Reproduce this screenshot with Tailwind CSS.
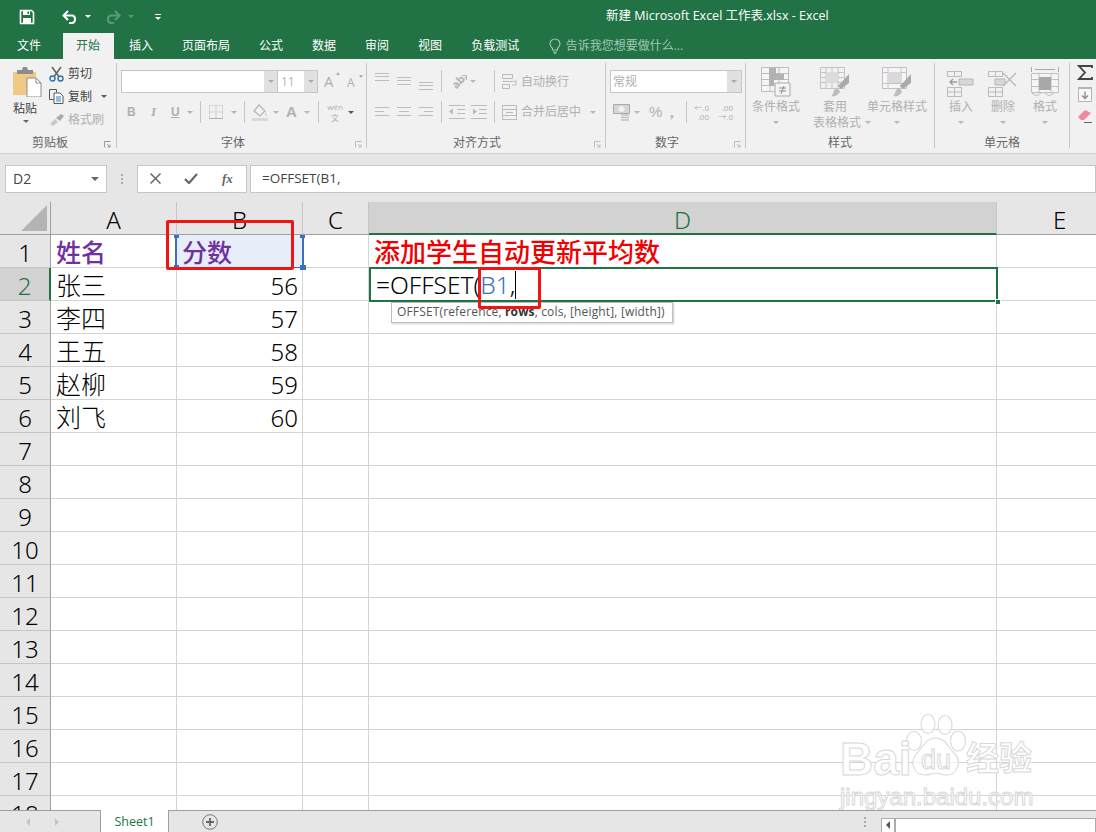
<!DOCTYPE html>
<html lang="zh-CN">
<head>
<meta charset="UTF-8" />
<title>新建 Microsoft Excel 工作表.xlsx - Excel</title>
<script src="https://cdn.jsdelivr.net/npm/@tailwindcss/browser@4"></script>
</head>
<body class="w-[1096px] h-[832px] overflow-hidden bg-white flex flex-col font-['Open_Sans','Noto_Sans_CJK_SC',sans-serif] text-[12px] text-[#444]">

<!-- title bar -->
<header class="h-[33px] shrink-0 bg-[#217346] flex items-center text-white">
  <svg class="ml-[19px] w-[16px] h-[16px]" viewBox="0 0 16 16"><path d="M1.5 1.5h11l2 2v11h-13z" fill="none" stroke="#fff" stroke-width="1.6"/><path d="M4 1.5h7v4.5H4z M4 9h8v5.500H4z" fill="#fff"/><path d="M8.500 2.500h1.500v2.500h-1.500z" fill="#217346"/></svg>
  <svg class="ml-[27px] w-[16px] h-[14px]" viewBox="0 0 16 14"><path d="M3 5.500h7.500a4 4 0 0 1 0 7.500H7" fill="none" stroke="#fff" stroke-width="2"/><path d="M6 1 L1.500 5.500 L6 10" fill="none" stroke="#fff" stroke-width="2"/></svg>
  <span class="ml-[7px] border-x-[3px] border-t-[3px] border-x-transparent border-t-white"></span>
  <svg class="ml-[14px] w-[16px] h-[14px]" viewBox="0 0 16 14"><path d="M13 5.500H5.500a4 4 0 0 0 0 7.500H9" fill="none" stroke="#5c9a79" stroke-width="2"/><path d="M10 1 L14.500 5.500 L10 10" fill="none" stroke="#5c9a79" stroke-width="2"/></svg>
  <span class="ml-[7px] border-x-[3px] border-t-[3px] border-x-transparent border-t-[#5c9a79]"></span>
  <span class="ml-[21px] flex flex-col items-center gap-[2px]"><span class="w-[6px] h-px bg-white"></span><span class="border-x-[3px] border-t-[3px] border-x-transparent border-t-white"></span></span>
  <span class="ml-[445px] text-[12.5px] whitespace-nowrap">新建 Microsoft Excel 工作表.xlsx - Excel</span>
</header>

<!-- tabs -->
<nav class="h-[26px] shrink-0 bg-[#217346] flex text-white pl-[3.5px] gap-[2px] leading-[26px]">
  <span class="px-[13.5px] mr-[6px]">文件</span>
  <span class="px-[13.5px] bg-[#f1f1f1] text-[#217346]">开始</span>
  <span class="px-[13.5px]">插入</span>
  <span class="px-[13.5px]">页面布局</span>
  <span class="px-[13.5px]">公式</span>
  <span class="px-[13.5px]">数据</span>
  <span class="px-[13.5px]">审阅</span>
  <span class="px-[13.5px]">视图</span>
  <span class="px-[13.5px]">负载测试</span>
  <span class="ml-[14px] flex items-center text-[#a5c8b5] whitespace-nowrap">
    <svg class="w-[12px] h-[16px] mr-[5px]" viewBox="0 0 12 16"><path d="M3.500 10.500C2 9 1 8 1 6a5 5 0 0 1 10 0c0 2-1 3-2.500 4.500V12h-5z M4 14h4 M5 15.500h2" fill="none" stroke="#a5c8b5" stroke-width="1.100"/></svg>告诉我您想要做什么...
  </span>
</nav>

<!-- ribbon -->
<section class="h-[95px] shrink-0 bg-[#f1f1f1] border-b border-[#d2d2d2] flex pt-[4px] text-[#b0b0b0]">

  <!-- clipboard -->
  <div class="relative w-[117px] h-[85px] border-r border-[#c6c6c6] flex flex-col">
    <div class="flex h-[70px]">
      <div class="w-[49px] flex flex-col items-start text-[#444]">
        <svg class="ml-[12px] mt-[3px] w-[30px] h-[31px]" viewBox="0 0 30 31"><path d="M1 6h23v23H1z" fill="#efc985"/><path d="M5 4h5l1-3h4l1 3h5v4H5z" fill="#8c8c8c"/><path d="M15 12h9l5 5v14H15z" fill="#fff" stroke="#8c8c8c"/><path d="M24 12v5h5" fill="none" stroke="#8c8c8c"/></svg>
        <span class="ml-[13px] mt-[4px] leading-[16px]">粘贴</span>
        <span class="ml-[23px] mt-[3px] border-x-[3px] border-t-[3px] border-x-transparent border-t-[#666]"></span>
      </div>
      <div class="-mt-px flex flex-col">
        <div class="h-[23px] flex items-center text-[#444]">
          <svg class="w-[15px] h-[16px] mr-[4px]" viewBox="0 0 15 16"><path d="M3 1l6.500 9 M12 1L5.500 10" stroke="#666" stroke-width="1.600" fill="none"/><circle cx="3.500" cy="12.500" r="2.500" fill="none" stroke="#2b6fb3" stroke-width="1.400"/><circle cx="11.500" cy="12.500" r="2.500" fill="none" stroke="#2b6fb3" stroke-width="1.400"/></svg>剪切
        </div>
        <div class="h-[23px] flex items-center text-[#444]">
          <svg class="w-[15px] h-[15px] mr-[4px]" viewBox="0 0 15 15"><path d="M.5.500h7v3M.5.500v10h4" fill="none" stroke="#555"/><path d="M5 4h6l3 3v7.500H5z" fill="#fff" stroke="#555"/><path d="M7 8h5M7 10h5M7 12h5" stroke="#3a76b5"/></svg>复制
          <span class="ml-[9px] border-x-[3px] border-t-[3px] border-x-transparent border-t-[#555]"></span>
        </div>
        <div class="h-[23px] pt-[1px] flex items-center">
          <svg class="w-[16px] h-[14px] mr-[3px]" viewBox="0 0 16 14"><path d="M1 11l5-5 3 3-5 4z" fill="#c8c8c8"/><path d="M7 5l5-4 3 2-4 5z" fill="#ababab"/></svg>格式刷
        </div>
      </div>
    </div>
    <span class="ml-[32px] mt-auto -mb-[3px] text-[#666] leading-[16px]">剪贴板</span>
    <svg class="absolute left-[104px] top-[78px] w-[7px] h-[7px]" viewBox="0 0 7 7"><path d="M.5 6.500v-6h6M3 3l3 3M6 3.500V6H3.500" fill="none" stroke="#999"/></svg>
  </div>

  <!-- font -->
  <div class="relative w-[250px] h-[85px] border-r border-[#c6c6c6] flex flex-col">
    <div class="mt-[7px] h-[23px] flex items-center pl-[4px]">
      <div class="w-[157px] h-[23px] bg-white border border-[#c6c6c6] flex justify-end">
        <span class="w-[13px] bg-[#e1e1e1] flex items-center justify-center"><span class="border-x-[3px] border-t-[3px] border-x-transparent border-t-[#aaa]"></span></span>
      </div>
      <div class="w-[40px] h-[23px] bg-white border border-l-0 border-[#c6c6c6] flex items-center justify-between pl-[3px]">
        <span class="text-[#b5b5b5]">11</span>
        <span class="w-[13px] h-full bg-[#e1e1e1] flex items-center justify-center"><span class="border-x-[3px] border-t-[3px] border-x-transparent border-t-[#aaa]"></span></span>
      </div>
      <span class="ml-[6px] relative text-[15px] w-[16px]">A<span class="absolute right-0 top-[2px] border-x-[2.5px] border-b-[3px] border-x-transparent border-b-[#b0b0b0]"></span></span>
      <span class="ml-[7px] relative text-[12px] w-[16px] pt-[2px]">A<span class="absolute right-0 top-[3px] border-x-[2.5px] border-t-[3px] border-x-transparent border-t-[#b0b0b0]"></span></span>
    </div>
    <div class="mt-[8px] h-[22px] flex items-center">
      <span class="ml-[10px] w-[9px] font-bold font-['Liberation_Sans']">B</span>
      <span class="ml-[15px] w-[6px] italic font-['Liberation_Serif'] font-bold text-[13px]">I</span>
      <span class="ml-[14px] w-[10px] underline font-bold font-['Liberation_Sans']">U</span>
      <span class="ml-[6px] border-x-[3px] border-t-[3px] border-x-transparent border-t-[#b8b8b8]"></span>
      <span class="ml-[7px] w-px h-[22px] bg-[#c6c6c6]"></span>
      <svg class="ml-[8px] w-[14px] h-[14px]" viewBox="0 0 14 14"><path d="M.5.500h13v13H.5z M7 .5v13 M.5 7h13" fill="none" stroke="#bbb" stroke-dasharray="1 1"/><path d="M0 13.500h14" stroke="#b0b0b0"/></svg>
      <span class="ml-[8px] border-x-[3px] border-t-[3px] border-x-transparent border-t-[#b8b8b8]"></span>
      <span class="ml-[7px] w-px h-[22px] bg-[#c6c6c6]"></span>
      <svg class="ml-[7px] w-[16px] h-[17px]" viewBox="0 0 16 17"><path d="M7 1l6 6-5 5-6-5z" fill="none" stroke="#b5b5b5" stroke-width="1.200"/><path d="M13 8l2 3-1 1z" fill="#b5b5b5"/><path d="M0 14h16v3H0z" fill="#d9d9d9"/></svg>
      <span class="ml-[5px] border-x-[3px] border-t-[3px] border-x-transparent border-t-[#b8b8b8]"></span>
      <span class="ml-[7px] w-[14px] text-[15px] font-['Liberation_Sans'] font-bold">A</span>
      <span class="ml-[4px] border-x-[3px] border-t-[3px] border-x-transparent border-t-[#b8b8b8]"></span>
      <span class="ml-[8px] w-px h-[22px] bg-[#c6c6c6]"></span>
      <span class="ml-[8px] w-[16px] flex flex-col items-center gap-[1px] text-[8px]"><span class="h-[10px] leading-[10px]">wén</span><span class="h-[10px] leading-[10px]">文</span></span>
      <span class="ml-[5px] border-x-[3px] border-t-[3px] border-x-transparent border-t-[#555]"></span>
    </div>
    <span class="ml-[104px] mt-auto -mb-[3px] text-[#666] leading-[16px]">字体</span>
    <svg class="absolute left-[238px] top-[78px] w-[7px] h-[7px]" viewBox="0 0 7 7"><path d="M.5 6.500v-6h6M3 3l3 3M6 3.500V6H3.500" fill="none" stroke="#bbb"/></svg>
  </div>

  <!-- alignment -->
  <div class="relative w-[239px] h-[85px] border-r border-[#c6c6c6] flex flex-col">
    <div class="mt-[7px] h-[22px] flex items-center pl-[8px]">
      <svg class="w-[58px] h-[22px]" viewBox="0 0 58 22"><path d="M0 3.500h14M0 6.500h14M0 10.500h14 M22 7.500h14M22 10.500h14M22 14.500h14 M44 12.500h14M44 15.500h14M44 19.500h14" stroke="#bdbdbd"/></svg>
      <span class="ml-[8px] w-px h-[22px] bg-[#c6c6c6]"></span>
      <span class="relative ml-[7px] w-[18px] h-[18px] flex items-center justify-center">
        <span class="-rotate-45 text-[11px] font-bold leading-[11px] text-[#b5b5b5]">ab</span>
        <svg class="absolute left-0 top-0 w-[18px] h-[18px]" viewBox="0 0 18 18"><path d="M8 15l9-10M13 3.500h4.500V8" fill="none" stroke="#b5b5b5"/></svg>
      </span>
      <span class="ml-[3px] border-x-[3px] border-t-[3px] border-x-transparent border-t-[#b8b8b8]"></span>
      <span class="ml-[18px] w-px h-[22px] bg-[#c6c6c6]"></span>
      <svg class="ml-[7px] w-[15px] h-[15px]" viewBox="0 0 15 15"><path d="M.5.500h10v4H.5z M.5 10.500h7v4h-7z M.5 7.500h10a2 2 0 0 1 3 1M14 6v5l-4 0" fill="none" stroke="#bbb"/></svg>
      <span class="ml-[4px] pt-[2px]">自动换行</span>
    </div>
    <div class="mt-[9px] h-[22px] flex items-center pl-[8px]">
      <svg class="w-[58px] h-[22px]" viewBox="0 0 58 22"><path d="M0 6.500h14M0 10.500h9M0 14.500h14 M22 6.500h14M24 10.500h10M22 14.500h14 M44 6.500h14M49 10.500h9M44 14.500h14" stroke="#bdbdbd"/></svg>
      <span class="ml-[8px] w-px h-[22px] bg-[#c6c6c6]"></span>
      <svg class="ml-[7px] w-[38px] h-[14px]" viewBox="0 0 38 14"><path d="M0 .5h16M8 4.500h8M8 8.500h8M0 13.500h16 M22 .5h16M30 4.500h8M30 8.500h8M22 13.500h16" stroke="#bbb"/><path d="M0 6.500l4-3v6z M28 6.500l-4-3v6z" fill="#bbb"/></svg>
      <span class="ml-[7px] w-px h-[22px] bg-[#c6c6c6]"></span>
      <svg class="ml-[7px] w-[15px] h-[15px]" viewBox="0 0 15 15"><path d="M.5.500h14v14H.5z M.5 4.500h14M.5 10.500h14M4 7.500h7" fill="none" stroke="#bbb"/></svg>
      <span class="ml-[4px]">合并后居中</span>
      <span class="ml-[9px] border-x-[3px] border-t-[3px] border-x-transparent border-t-[#b8b8b8]"></span>
    </div>
    <span class="ml-[86px] mt-auto -mb-[3px] text-[#666] leading-[16px]">对齐方式</span>
    <svg class="absolute left-[227px] top-[78px] w-[7px] h-[7px]" viewBox="0 0 7 7"><path d="M.5 6.500v-6h6M3 3l3 3M6 3.500V6H3.500" fill="none" stroke="#bbb"/></svg>
  </div>

  <!-- number -->
  <div class="relative w-[140px] h-[85px] border-r border-[#c6c6c6] flex flex-col">
    <div class="mt-[7px] ml-[4px] w-[132px] h-[23px] bg-white border border-[#c6c6c6] flex items-center justify-between pl-[2px]">
      <span>常规</span>
      <span class="w-[14px] h-full bg-[#e1e1e1] flex items-center justify-center"><span class="border-x-[3px] border-t-[3px] border-x-transparent border-t-[#aaa]"></span></span>
    </div>
    <div class="mt-[8px] h-[22px] flex items-center">
      <svg class="ml-[7px] w-[17px] h-[17px]" viewBox="0 0 17 17"><path d="M.5.500h16v9H.5z" fill="#d6d6d6" stroke="#aaa"/><circle cx="8.500" cy="5" r="3" fill="#f1f1f1"/><path d="M8 11h8M8 13.500h8M8 16h8" stroke="#c2c2c2" stroke-width="1.500"/></svg>
      <span class="ml-[4px] border-x-[3px] border-t-[3px] border-x-transparent border-t-[#b8b8b8]"></span>
      <span class="ml-[9px] text-[15px] w-[14px] font-['Liberation_Sans']">%</span>
      <span class="ml-[7px] text-[15px] w-[6px] font-bold font-['Liberation_Serif']">,</span>
      <span class="ml-[10px] w-px h-[22px] bg-[#c6c6c6]"></span>
      <span class="ml-[7px] w-[15px] flex flex-col text-[8px] items-end"><span class="h-[9px] leading-[9px]">←.0</span><span class="h-[9px] leading-[9px]">.00</span></span>
      <span class="ml-[6px] w-[18px] flex flex-col text-[8px] items-end"><span class="h-[9px] leading-[9px]">.00</span><span class="h-[9px] leading-[9px]">→.0</span></span>
    </div>
    <span class="ml-[49px] mt-auto -mb-[3px] text-[#666] leading-[16px]">数字</span>
    <svg class="absolute left-[128px] top-[78px] w-[7px] h-[7px]" viewBox="0 0 7 7"><path d="M.5 6.500v-6h6M3 3l3 3M6 3.500V6H3.500" fill="none" stroke="#bbb"/></svg>
  </div>

  <!-- styles -->
  <div class="relative w-[189px] h-[85px] border-r border-[#c6c6c6] flex flex-col">
    <div class="flex h-[72px] pl-[4px]">
      <div class="w-[52px] flex flex-col items-center">
        <svg class="mt-[4px] w-[30px] h-[30px]" viewBox="0 0 30 30"><path d="M.5.500h27v24H.5z M9 .5v24 M18 .5v24 M.5 6.500h27 M.5 12.500h27 M.5 18.500h27" fill="#f7f4f7" stroke="#bdbdbd"/><path d="M8 1h7v6H8z M8 7h15v6H8z M8 13h5v6H8z" fill="#b2b2b2"/><path d="M14 16h15v13H14z" fill="#f4f4f4" stroke="#aaa"/><path d="M18 21h7M18 24h7M23 19l-3 8" stroke="#8d8d8d" fill="none"/></svg>
        <span class="mt-[2px] leading-[16px]">条件格式</span>
        <span class="mt-[6px] border-x-[3px] border-t-[3px] border-x-transparent border-t-[#b8b8b8]"></span>
      </div>
      <div class="ml-[2px] w-[62px] flex flex-col items-center">
        <svg class="mt-[4px] w-[30px] h-[30px]" viewBox="0 0 30 30"><path d="M.5.500h24v21H.5z M6 .5v21 M12 .5v21 M18 .5v21 M.5 5.500h24 M.5 10.500h24 M.5 15.500h24" fill="#f1f1f1" stroke="#c4c4c4"/><path d="M6 5h12v11H6z" fill="#dcdcdc"/><path d="M29 7v9l-8 6-3-3z" fill="#aaa"/><path d="M11 29c3-1 1-6 6-8l3 3c-1 4-5 6-9 5z" fill="#bdbdbd"/></svg>
        <span class="mt-[2px] leading-[16px]">套用</span>
        <span class="leading-[15px] flex items-center whitespace-nowrap ml-[14px]">表格格式<span class="ml-[4px] border-x-[3px] border-t-[3px] border-x-transparent border-t-[#b8b8b8]"></span></span>
      </div>
      <div class="w-[62px] flex flex-col items-center">
        <svg class="mt-[4px] w-[30px] h-[30px]" viewBox="0 0 30 30"><path d="M.5.500h24v21H.5z" fill="#f7f4f7" stroke="#c0c0c0"/><path d="M.5 5.500h24M.5 16.500h24M6 .5v21M19 .5v21" stroke="#c4c4c4"/><path d="M6 5h13v11H6z" fill="#ddd8dd"/><path d="M29 7v9l-8 6-3-3z" fill="#aaa"/><path d="M11 29c3-1 1-6 6-8l3 3c-1 4-5 6-9 5z" fill="#bdbdbd"/></svg>
        <span class="mt-[2px] leading-[16px] whitespace-nowrap">单元格样式</span>
        <span class="mt-[6px] border-x-[3px] border-t-[3px] border-x-transparent border-t-[#b8b8b8]"></span>
      </div>
    </div>
    <span class="ml-[82px] mt-auto -mb-[3px] text-[#666] leading-[16px]">样式</span>
  </div>

  <!-- cells -->
  <div class="relative w-[135px] h-[85px] border-r border-[#c6c6c6] flex flex-col">
    <div class="flex h-[72px] pl-[5px]">
      <div class="w-[42px] flex flex-col items-center">
        <svg class="mt-[4px] w-[28px] h-[30px]" viewBox="0 0 28 30"><path d="M.5 4.500h7v5h-7z M7.500 4.500h7v5h-7z M.5 20.500h7v9h-7z M7.500 20.500h7v9h-7z M.5 25h14" fill="none" stroke="#bbb"/><path d="M12 12h14v6H12z" fill="#d8d8d8" stroke="#b5b5b5"/><path d="M10 15H3M6 12l-3 3 3 3" fill="none" stroke="#999" stroke-width="1.300"/></svg>
        <span class="mt-[2px] leading-[16px]">插入</span>
        <span class="mt-[6px] border-x-[3px] border-t-[3px] border-x-transparent border-t-[#b8b8b8]"></span>
      </div>
      <div class="w-[42px] flex flex-col items-center">
        <svg class="mt-[4px] w-[30px] h-[30px]" viewBox="0 0 30 30"><path d="M.5 4.500h7v5h-7z M7.500 4.500h7v5h-7z M.5 20.500h7v9h-7z M7.500 20.500h7v9h-7z M.5 25h14" fill="none" stroke="#bbb"/><path d="M7 12h10v6H7z" fill="#d8d8d8" stroke="#b5b5b5"/><path d="M15 6l13 13M28 6L15 19" stroke="#bdbdbd" stroke-width="1.500"/></svg>
        <span class="mt-[2px] leading-[16px]">删除</span>
        <span class="mt-[6px] border-x-[3px] border-t-[3px] border-x-transparent border-t-[#b8b8b8]"></span>
      </div>
      <div class="w-[42px] flex flex-col items-center">
        <svg class="mt-[4px] w-[28px] h-[30px]" viewBox="0 0 28 30"><path d="M.5 0v5M27.500 0v5M4 2.500h20" stroke="#aaa"/><path d="M.5 6.500h27v19H.5z M8 6.500v19 M20 6.500v19 M.5 12.500h27 M.5 19.500h27" fill="#f7f4f7" stroke="#c0c0c0"/><path d="M8 10h12v13H8z" fill="#a8a8a8"/><path d="M1 26c3 3 6 3 9 0M14 26c3 3 6 3 9 0" fill="none" stroke="#bbb"/></svg>
        <span class="mt-[2px] leading-[16px]">格式</span>
        <span class="mt-[6px] border-x-[3px] border-t-[3px] border-x-transparent border-t-[#b8b8b8]"></span>
      </div>
    </div>
    <span class="ml-[49px] mt-auto -mb-[3px] text-[#666] leading-[16px]">单元格</span>
  </div>

  <!-- editing -->
  <div class="pl-[7px] flex flex-col items-start">
    <svg class="mt-[2px] w-[16px] h-[15px]" viewBox="0 0 16 15"><path d="M15 3V1H2l6 6.500L2 14h13v-2" fill="none" stroke="#444" stroke-width="1.800"/></svg>
    <svg class="mt-[7px] ml-[1px] w-[14px] h-[15px]" viewBox="0 0 14 15"><path d="M.5.500h13v14H.5z" fill="#f8f8f8" stroke="#b5b5b5"/><path d="M0 0h14v2H0z" fill="#b5b5b5"/><path d="M7 4.500v7M4 8.500l3 3 3-3" fill="none" stroke="#8f8f8f" stroke-width="1.400"/></svg>
    <svg class="mt-[7px] ml-[1px] w-[14px] h-[14px]" viewBox="0 0 14 14"><path d="M0 8l7-7 6 3-7 7H3z" fill="#ee8a9c"/><path d="M6 13.500h8" stroke="#666"/></svg>
  </div>
</section>

<!-- formula bar -->
<section class="h-[48px] shrink-0 bg-[#e6e6e6] flex items-center pt-[1px] text-[#444]">
  <div class="ml-[5px] w-[102px] h-[28px] bg-white border border-[#c6c6c6] flex items-center justify-between px-[7px] text-[14px]">
    <span>D2</span>
    <span class="border-x-[4px] border-t-[4px] border-x-transparent border-t-[#666]"></span>
  </div>
  <div class="ml-[14px] flex flex-col gap-[2px]"><span class="w-[2px] h-[2px] bg-[#aaa]"></span><span class="w-[2px] h-[2px] bg-[#aaa]"></span><span class="w-[2px] h-[2px] bg-[#aaa]"></span></div>
  <div class="ml-[14px] w-[110px] h-[28px] bg-white border border-[#c6c6c6] flex items-center text-[#666]">
    <svg class="ml-[12px] w-[11px] h-[11px]" viewBox="0 0 11 11"><path d="M.5.500l10 10M10.500.5l-10 10" stroke="#666" stroke-width="1.500"/></svg>
    <svg class="ml-[23px] w-[14px] h-[11px]" viewBox="0 0 14 11"><path d="M1 6l4 4 8-9" fill="none" stroke="#666" stroke-width="2.200"/></svg>
    <span class="ml-[24px] italic font-bold font-['Liberation_Serif'] text-[13px]">fx</span>
  </div>
  <div class="ml-[3px] flex-1 h-[28px] bg-white border border-[#c6c6c6] flex items-center pl-[11px] pb-[1px] text-[13.5px]">=OFFSET(B1,</div>
</section>

<!-- sheet -->
<main class="relative flex-1 min-h-0 overflow-hidden font-['Noto_Sans','Noto_Sans_CJK_SC',sans-serif] font-light text-[24px] text-black">
  <div id="sheet" class="grid grid-cols-[51px_126px_126px_66px_628px_1fr] auto-rows-[33px] leading-[35px]">
    <div class="bg-[#e6e6e6] border-r border-b border-[#9f9f9f] relative">
      <svg class="absolute right-[3px] bottom-[3px] w-[26px] h-[26px]" viewBox="0 0 26 26"><path d="M26 0v26H0z" fill="#b4b4b4"/></svg>
    </div>
    <div class="bg-[#e6e6e6] border-r border-b border-[#c6c6c6] border-b-[#9f9f9f] text-center">A</div>
    <div class="bg-[#e6e6e6] border-r border-b border-[#c6c6c6] border-b-[#9f9f9f] text-center">B</div>
    <div class="bg-[#e6e6e6] border-r border-b border-[#c6c6c6] border-b-[#9f9f9f] text-center">C</div>
    <div class="bg-[#d2d2d2] border-r border-[#c6c6c6] border-b-2 border-b-[#217346] text-center text-[#217346]">D</div>
    <div class="bg-[#e6e6e6] border-b border-[#9f9f9f] pl-[56px]">E</div>

    <div class="bg-[#e6e6e6] border-r border-b border-r-[#9f9f9f] border-b-[#c6c6c6] text-center">1</div>
    <div class="border-r border-b border-[#d4d4d4] pl-[5px] text-[25px] font-medium text-[#7030a0]">姓名</div>
    <div class="border-r border-b border-[#d4d4d4] pl-[5px] text-[25px] font-medium text-[#7030a0] bg-[#e8eef9]">分数</div>
    <div class="border-r border-b border-[#d4d4d4]"></div>
    <div class="border-r border-b border-[#d4d4d4] pl-[5px] text-[26px] font-medium text-[#f00000] whitespace-nowrap">添加学生自动更新平均数</div>
    <div class="border-b border-[#d4d4d4]"></div>

    <div class="bg-[#d2d2d2] border-r-2 border-b border-r-[#217346] border-b-[#c6c6c6] text-center text-[#217346]">2</div>
    <div class="border-r border-b border-[#d4d4d4] pl-[5px] text-[25px]">张三</div>
    <div class="border-r border-b border-[#d4d4d4] pr-[4px] text-right">56</div>
    <div class="border-r border-b border-[#d4d4d4]"></div>
    <div class="border-r border-b border-[#d4d4d4]"></div>
    <div class="border-b border-[#d4d4d4]"></div>

    <div class="bg-[#e6e6e6] border-r border-b border-r-[#9f9f9f] border-b-[#c6c6c6] text-center">3</div>
    <div class="border-r border-b border-[#d4d4d4] pl-[5px] text-[25px]">李四</div>
    <div class="border-r border-b border-[#d4d4d4] pr-[4px] text-right">57</div>
    <div class="border-r border-b border-[#d4d4d4]"></div>
    <div class="border-r border-b border-[#d4d4d4]"></div>
    <div class="border-b border-[#d4d4d4]"></div>

    <div class="bg-[#e6e6e6] border-r border-b border-r-[#9f9f9f] border-b-[#c6c6c6] text-center">4</div>
    <div class="border-r border-b border-[#d4d4d4] pl-[5px] text-[25px]">王五</div>
    <div class="border-r border-b border-[#d4d4d4] pr-[4px] text-right">58</div>
    <div class="border-r border-b border-[#d4d4d4]"></div>
    <div class="border-r border-b border-[#d4d4d4]"></div>
    <div class="border-b border-[#d4d4d4]"></div>

    <div class="bg-[#e6e6e6] border-r border-b border-r-[#9f9f9f] border-b-[#c6c6c6] text-center">5</div>
    <div class="border-r border-b border-[#d4d4d4] pl-[5px] text-[25px]">赵柳</div>
    <div class="border-r border-b border-[#d4d4d4] pr-[4px] text-right">59</div>
    <div class="border-r border-b border-[#d4d4d4]"></div>
    <div class="border-r border-b border-[#d4d4d4]"></div>
    <div class="border-b border-[#d4d4d4]"></div>

    <div class="bg-[#e6e6e6] border-r border-b border-r-[#9f9f9f] border-b-[#c6c6c6] text-center">6</div>
    <div class="border-r border-b border-[#d4d4d4] pl-[5px] text-[25px]">刘飞</div>
    <div class="border-r border-b border-[#d4d4d4] pr-[4px] text-right">60</div>
    <div class="border-r border-b border-[#d4d4d4]"></div>
    <div class="border-r border-b border-[#d4d4d4]"></div>
    <div class="border-b border-[#d4d4d4]"></div>
  </div>

  <!-- B1 selection handles -->
  <div class="absolute left-[175px] top-[33px] w-[2px] h-[32px] bg-[#3b6fc4]"></div>
  <div class="absolute left-[302px] top-[33px] w-[2px] h-[32px] bg-[#3b6fc4]"></div>
  <div class="absolute left-[174px] top-[33px] w-[5px] h-[3px] bg-[#3b6fc4]"></div>
  <div class="absolute left-[300px] top-[33px] w-[5px] h-[3px] bg-[#3b6fc4]"></div>
  <div class="absolute left-[174px] top-[63px] w-[5px] h-[3px] bg-[#3b6fc4]"></div>
  <div class="absolute left-[293px] top-[65px] w-[8px] h-px bg-[#3b6fc4]"></div>
  <div class="absolute left-[300px] top-[63px] w-[6px] h-[5px] bg-[#3b6fc4]"></div>

  <!-- D2 in edit mode -->
  <div class="absolute left-[369px] top-[65px] w-[629px] h-[35px] border-2 border-[#217346] bg-white flex items-center pl-[5px] whitespace-nowrap leading-[33px] text-[24.5px]">=OFFSET(<span class="text-[#3b6fc4]">B1</span>,<span class="w-px h-[28px] bg-black"></span></div>
  <div class="absolute left-[995px] top-[97px] w-[4px] h-[4px] bg-[#217346] border border-white box-content"></div>

  <!-- function tooltip -->
  <div class="absolute left-[391px] top-[100px] w-[282px] h-[21px] bg-white border border-[#bebebe] shadow-[1px_1px_2px_rgba(0,0,0,.2)] font-['Open_Sans',sans-serif] font-normal text-[12px] tracking-[.15px] leading-[18px] text-[#555] pl-[5px] whitespace-nowrap">OFFSET(reference, <b class="text-[#333]">rows</b>, cols, [height], [width])</div>

  <!-- red annotation boxes -->
  <div class="absolute left-[166px] top-[18px] w-[128px] h-[50px] border-[3px] border-[#f01414] rounded-[2px]"></div>
  <div class="absolute left-[478px] top-[65px] w-[63px] h-[42px] border-[3px] border-[#f01414] rounded-[2px]"></div>

  <!-- watermark -->
  <div class="absolute left-[840px] top-[510px] w-[200px] h-[98px] pointer-events-none font-['Liberation_Sans',sans-serif] font-normal text-white [-webkit-text-stroke:1px_#d8d8d8]">
    <svg class="absolute left-[65px] top-[2px] w-[62px] h-[66px]" viewBox="0 0 62 66"><g fill="#fff" fill-opacity=".7" stroke="#dcdcdc" stroke-width="1.200"><ellipse cx="9" cy="27" rx="7.500" ry="9.500"/><ellipse cx="23" cy="10" rx="7" ry="9.500"/><ellipse cx="40" cy="11" rx="7" ry="9.500"/><ellipse cx="53" cy="27" rx="7.500" ry="10"/><path d="M31 24c10 0 12 10 19 16 7 8 2 22-10 21-4 0-6-2-9-2s-6 2-11 2c-11 0-16-12-9-21 7-6 9-16 20-16z"/></g></svg>
    <span class="absolute left-[0px] top-[22px] text-[46px] leading-[50px] font-bold">Bai</span>
    <span class="absolute left-[81px] top-[33px] text-[27px] leading-[30px]">du</span>
    <span class="absolute left-[126px] top-[24px] text-[33px] leading-[40px] font-bold whitespace-nowrap font-['Noto_Sans_CJK_SC',sans-serif]">经验</span>
    <span class="absolute left-[0px] top-[71px] text-[24px] leading-[28px] whitespace-nowrap">jingyan.baidu.com</span>
  </div>
</main>

<!-- sheet tabs -->
<footer class="h-[22px] shrink-0 bg-[#e6e6e6] border-t border-[#9f9f9f] flex items-center">
  <span class="ml-[26px] border-y-[4px] border-r-[4px] border-y-transparent border-r-[#c4c4c4]"></span>
  <span class="ml-[25px] border-y-[4px] border-l-[4px] border-y-transparent border-l-[#c4c4c4]"></span>
  <div class="ml-[41px] -mt-px w-[69px] h-[22px] bg-white border-x border-[#9f9f9f] text-[#217346] text-center leading-[23px] text-[12.5px]">Sheet1</div>
  <svg class="ml-[33px] w-[16px] h-[16px]" viewBox="0 0 16 16"><circle cx="8" cy="8" r="7.300" fill="none" stroke="#777"/><path d="M8 4v8M4 8h8" stroke="#666" stroke-width="1.800"/></svg>
  <div class="ml-[646px] flex flex-col gap-[2px]"><span class="w-[2px] h-[2px] bg-[#aaa]"></span><span class="w-[2px] h-[2px] bg-[#aaa]"></span><span class="w-[2px] h-[2px] bg-[#aaa]"></span></div>
  <div class="ml-[15px] mt-[7px] flex-1 h-[15px] flex bg-white border border-[#ababab]">
    <span class="w-[14px] border-r-2 border-[#ababab] flex items-center justify-center"><span class="border-y-[4px] border-r-[4px] border-y-transparent border-r-[#555]"></span></span>
  </div>
</footer>

<script>
    // the empty rows below row 6
    const sheet = document.getElementById("sheet");
    for (let r = 7; r <= 18; r++) {
        const head = document.createElement("div");
        head.className = "bg-[#e6e6e6] border-r border-b border-r-[#9f9f9f] border-b-[#c6c6c6] text-center";
        head.textContent = r;
        sheet.appendChild(head);
        for (let c = 0; c < 5; c++) {
            const cell = document.createElement("div");
            cell.className = c < 4 ? "border-r border-b border-[#d4d4d4]" : "border-b border-[#d4d4d4]";
            sheet.appendChild(cell);
        }
    }
</script>
</body>
</html>
